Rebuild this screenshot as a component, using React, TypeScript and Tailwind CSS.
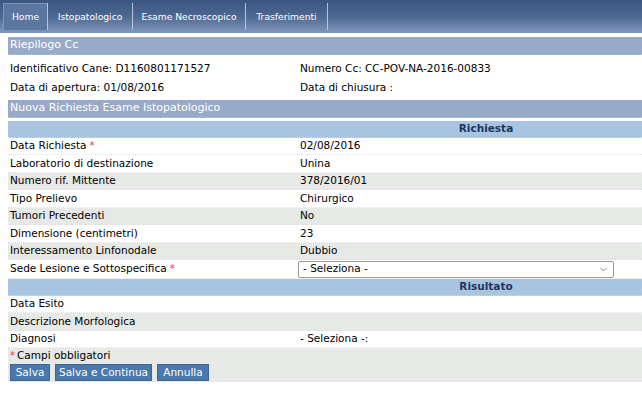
import { ChevronDown } from 'lucide-react'

const font = { fontFamily: '"DejaVu Sans", Verdana, sans-serif' }

const tabs = [
  { label: 'Home', w: 'w-[44px]' },
  { label: 'Istopatologico', w: 'w-[84px]' },
  { label: 'Esame Necroscopico', w: 'w-[112px]' },
  { label: 'Trasferimenti', w: 'w-[81px]' },
]

const richiesta: { label: string; value?: string; req?: boolean; select?: boolean }[] = [
  { label: 'Data Richiesta', value: '02/08/2016', req: true },
  { label: 'Laboratorio di destinazione', value: 'Unina' },
  { label: 'Numero rif. Mittente', value: '378/2016/01' },
  { label: 'Tipo Prelievo', value: 'Chirurgico' },
  { label: 'Tumori Precedenti', value: 'No' },
  { label: 'Dimensione (centimetri)', value: '23' },
  { label: 'Interessamento Linfonodale', value: 'Dubbio' },
  { label: 'Sede Lesione e Sottospecifica', req: true, select: true },
]

const risultato = [
  { label: 'Data Esito', value: '' },
  { label: 'Descrizione Morfologica', value: '' },
  { label: 'Diagnosi', value: '- Seleziona -:' },
]

// the first two richiesta rows are both white, then it alternates
const greyRich = [false, false, true, false, true, false, true, false]

const buttons = [
  { label: 'Salva', w: 'w-[40px]' },
  { label: 'Salva e Continua', w: 'w-[97px]' },
  { label: 'Annulla', w: 'w-[52px]' },
]

function Star() {
  return <span className="ml-[3px] align-top text-[10px] text-[#e8383a]">*</span>
}

function Row({ label, value, req, grey, h, children }: { label: string; value?: string; req?: boolean; grey?: boolean; h: string; children?: React.ReactNode }) {
  return (
    <div
      className={
        'flex items-center border-b border-dotted border-[#dde3ea] text-[10.5px] text-black ' +
        h +
        (grey ? ' bg-[#e6e9e6]' : ' bg-white')
      }
    >
      <div className="w-[290px] shrink-0 pl-[2px]">
        {label}
        {req && <Star />}
      </div>
      <div className="flex-1 pl-[2px]">{children ?? value}</div>
    </div>
  )
}

function SectionHead({ title }: { title: string }) {
  return (
    <div className="flex h-[17px] items-center border-b border-dotted border-[#c9dbeb] bg-[#a9c4de] text-[10.5px] font-bold text-[#1d3563]">
      <div className="w-[290px] shrink-0" />
      <div className="flex-1 text-center">{title}</div>
    </div>
  )
}

function Bar({ title }: { title: string }) {
  return (
    <div className="flex h-[18px] items-center border-b border-dotted border-[#b8c6da] bg-[#97aac8] pl-[2px] text-[11px] text-white">
      {title}
    </div>
  )
}

export default function App() {
  return (
    <div className="h-[400px] w-[642px] overflow-hidden bg-white" style={font}>
      <nav className="flex h-[33px] items-center bg-gradient-to-b from-[#3a5682] via-[#4d6891] to-[#8198bb] pl-[3px]">
        {tabs.map((t, i) => (
          <div key={t.label} className="flex h-[27px] items-center">
            <div
              className={
                'flex h-full items-center justify-center text-[9.2px] text-white ' +
                t.w +
                (i === 0 ? ' border-l border-t border-[#7e95b8] bg-[#5b77a0]' : '')
              }
            >
              {t.label}
            </div>
            <div className="h-full w-px bg-[#b7c4d8]" />
          </div>
        ))}
      </nav>

      <div className="w-[674px] pl-[8px] pt-[4px]">
        <Bar title="Riepilogo Cc" />
        <div className="flex h-[22px] items-end text-[10.5px] text-black">
          <div className="w-[290px] pl-[2px]">Identificativo Cane: D1160801171527</div>
          <div className="pl-[2px]">Numero Cc: CC-POV-NA-2016-00833</div>
        </div>
        <div className="flex h-[19px] items-end text-[10.5px] text-black">
          <div className="w-[290px] pl-[2px]">Data di apertura: 01/08/2016</div>
          <div className="pl-[2px]">Data di chiusura :</div>
        </div>
        <div className="mt-[4px]">
          <Bar title="Nuova Richiesta Esame Istopatologico" />
        </div>

        <div className="mt-[3px]">
          <SectionHead title="Richiesta" />
          {richiesta.map((r, i) => (
            <Row
              key={r.label}
              label={r.label}
              value={r.value}
              req={r.req}
              grey={greyRich[i]}
              h={r.select ? 'h-[19px]' : i % 2 === 1 ? 'h-[18px]' : 'h-[17px]'}
            >
              {r.select ? (
                <div className="-ml-[2px] flex h-[17px] w-[316px] items-center justify-between rounded-[2px] border border-[#9a9a9a] bg-white pl-[4px] pr-[4px]">
                  <span>- Seleziona -</span>
                  <ChevronDown className="h-[11px] w-[11px] text-[#555]" strokeWidth={1.5} />
                </div>
              ) : undefined}
            </Row>
          ))}
          <SectionHead title="Risultato" />
          {risultato.map((r, i) => (
            <Row key={r.label} label={r.label} value={r.value} grey={i % 2 === 1} h={i % 2 === 1 ? 'h-[18px]' : 'h-[17px]'} />
          ))}
          <div className="bg-[#e6e9e6] pb-[1px] text-[10.5px] text-black">
            <div className="flex h-[16px] items-center pl-[2px]">
              <span className="mr-[2px] self-start text-[10px] text-[#e8383a]">*</span>
              Campi obbligatori
            </div>
            <div className="flex h-[17px] items-start gap-[5px] pl-[2px]">
              {buttons.map((b) => (
                <button
                  key={b.label}
                  className={'h-[17px] border border-[#3a6698] bg-[#4a78ac] text-[10.5px] leading-none text-white ' + b.w}
                >
                  {b.label}
                </button>
              ))}
            </div>
          </div>
        </div>
      </div>
    </div>
  )
}
